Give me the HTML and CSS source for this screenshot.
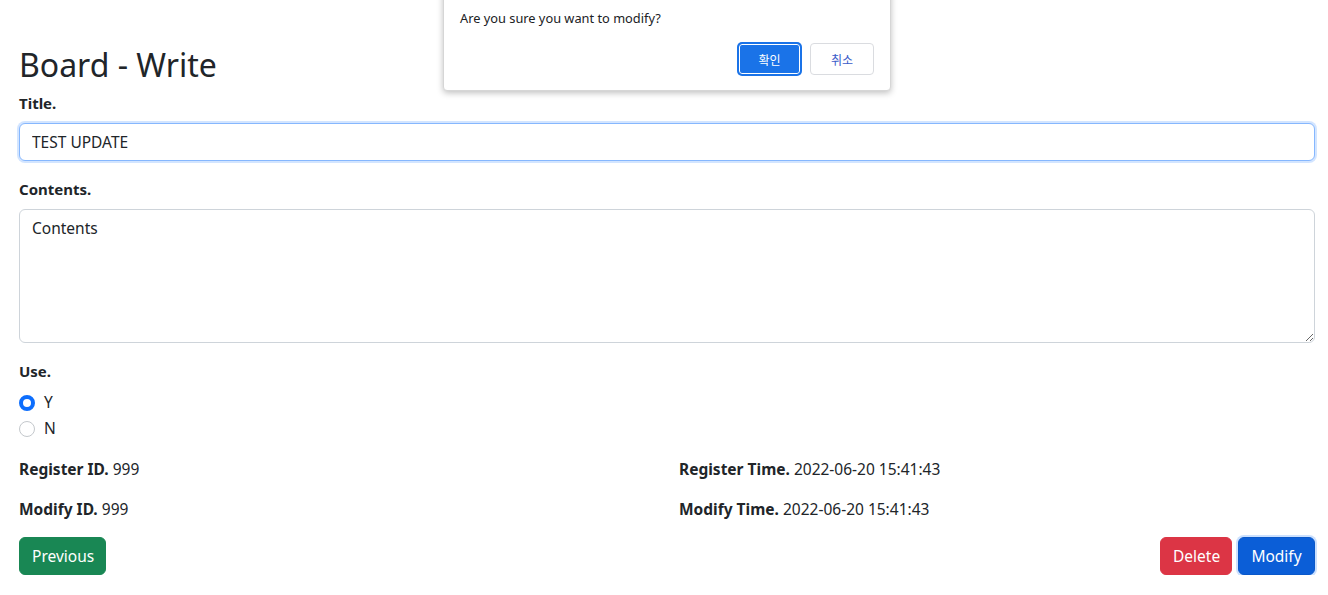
FILE: index.html
```html
<!DOCTYPE html>
<html lang="en">
<head>
<meta charset="utf-8">
<title>Board - Write</title>
<link rel="stylesheet" href="styles.css">
</head>
<body>
<div class="page">
  <h2 class="title">Board - Write</h2>
  <div class="field">
    <label class="label" for="title">Title.</label>
    <input id="title" class="control focus" type="text" value="TEST UPDATE">
  </div>
  <div class="field">
    <label class="label" for="contents">Contents.</label>
    <textarea id="contents" class="control area">Contents</textarea>
  </div>
  <div class="field use">
    <div class="label">Use.</div>
    <label class="check"><input type="radio" name="use" checked><span>Y</span></label>
    <label class="check"><input type="radio" name="use"><span>N</span></label>
  </div>
  <div class="meta">
    <div class="meta-item"><b>Register ID.</b> 999</div>
    <div class="meta-item"><b>Register Time.</b> 2022-06-20 15:41:43</div>
    <div class="meta-item"><b>Modify ID.</b> 999</div>
    <div class="meta-item"><b>Modify Time.</b> 2022-06-20 15:41:43</div>
  </div>
  <div class="actions">
    <button class="btn success">Previous</button>
    <div class="right">
      <button class="btn danger">Delete</button>
      <button class="btn primary">Modify</button>
    </div>
  </div>
</div>

<div class="dialog">
  <p class="dialog-msg">Are you sure you want to modify?</p>
  <div class="dialog-btns">
    <button class="dbtn ok">확인</button>
    <button class="dbtn cancel">취소</button>
  </div>
</div>
</body>
</html>
```

FILE: styles.css
```css
* { box-sizing: border-box; }
html, body { margin: 0; padding: 0; background: #fff; }
body {
  font-family: "Noto Sans", "Open Sans", "Noto Sans CJK KR", sans-serif;
  font-size: 15.5px;
  line-height: 1.5;
  color: #212529;
}
.page {
  padding: 45px 13px 0 19px;
}
.title {
  margin: 0 0 7px;
  padding-top: 1px;
  font-size: 32px;
  font-weight: 400;
  line-height: 1.2;
  height: 39px;
}
.field { margin-bottom: 16px; }
.label {
  display: block;
  font-weight: 700;
  font-size: 15px;
  margin-bottom: 8px;
  height: 24px;
  line-height: 24px;
}
.control {
  display: block;
  width: 100%;
  font-family: inherit;
  font-size: 15.5px;
  color: #212529;
  padding: 6px 12px;
  border: 1px solid #ced4da;
  border-radius: 6px;
  background: #fff;
  height: 38px;
  line-height: 24px;
  outline: none;
}
.control.focus {
  border-color: #86b7fe;
  box-shadow: 0 0 0 2px rgba(13, 110, 253, 0.18);
}
.area { height: 134px; resize: vertical; }
.use { margin-bottom: 16px; }
.check {
  display: flex;
  align-items: center;
  gap: 9px;
  height: 24px;
  margin-bottom: 2px;
  font-size: 15.5px;
}
.check input {
  appearance: none;
  -webkit-appearance: none;
  margin: 0;
  width: 16px;
  height: 16px;
  border-radius: 50%;
  border: 1px solid #c4c8cc;
  background: #fff;
}
.check input:checked {
  border: 4.5px solid #0d6efd;
  background: #fff;
}
.meta {
  display: grid;
  grid-template-columns: 660px 1fr;
  row-gap: 16px;
  font-size: 15.5px;
  margin-bottom: 16px;
}
.meta-item { height: 24px; line-height: 24px; }
.meta b { font-weight: 700; font-size: 15.5px; }
.actions {
  display: flex;
  justify-content: space-between;
}
.right { display: flex; gap: 6px; }
.btn {
  font-family: inherit;
  font-size: 15.5px;
  color: #fff;
  border: 1px solid transparent;
  border-radius: 6px;
  height: 38px;
  padding: 0 12px;
  line-height: 24px;
}
.success { background: #198754; border-color: #198754; width: 87px; }
.danger { background: #dc3545; border-color: #dc3545; width: 72px; }
.primary {
  background: #0b5ed7;
  border-color: #0a58ca;
  width: 77px;
  box-shadow: 0 0 0 2px rgba(49, 132, 253, 0.25);
}
.dialog {
  position: absolute;
  left: 443px;
  top: -10px;
  width: 448px;
  height: 101px;
  background: #fff;
  border: 1px solid #d6d6d6;
  border-radius: 0 0 4px 4px;
  box-shadow: 0 2px 6px rgba(0, 0, 0, 0.25);
  padding: 19px 16px 0;
  font-family: "Noto Sans", "Noto Sans CJK KR", sans-serif;
}
.dialog-msg {
  margin: 0;
  font-size: 12.8px;
  line-height: 16px;
  color: #202124;
}
.dialog-btns {
  display: flex;
  justify-content: flex-end;
  gap: 9px;
  margin-top: 17px;
  padding-right: 0;
}
.dbtn {
  font-family: "Noto Sans CJK KR", sans-serif;
  font-size: 12px;
  height: 32px;
  border-radius: 4px;
}
.ok {
  width: 63px;
  background: #1a73e8;
  color: #fff;
  border: 1px solid #1a73e8;
  box-shadow: inset 0 0 0 1px #fff, 0 0 0 1px #1a73e8;
}
.cancel {
  width: 64px;
  background: #fff;
  color: #3b5cc9;
  border: 1px solid #dadce0;
}
```
